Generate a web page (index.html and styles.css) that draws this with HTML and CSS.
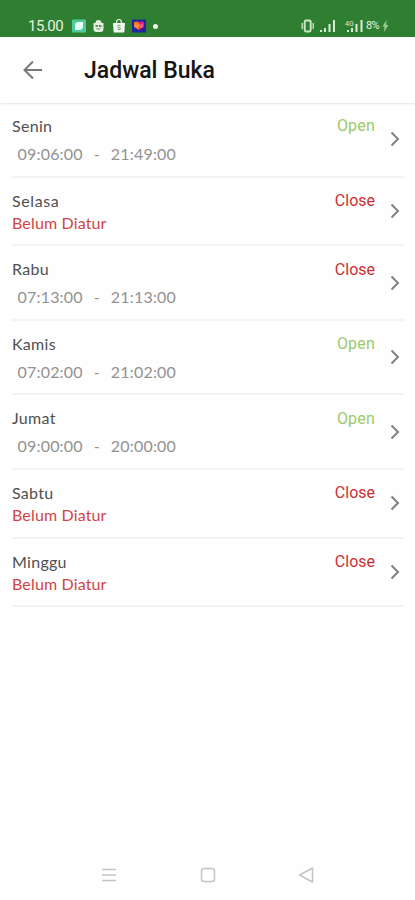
FILE: index.html
```html
<!DOCTYPE html>
<html lang="id">
<head>
<meta charset="utf-8">
<meta name="viewport" content="width=device-width, initial-scale=1">
<title>Jadwal Buka</title>
<link rel="stylesheet" href="styles.css">
</head>
<body>
<div class="status-bar">
  <div class="status-left">
    <span class="clock">15.00</span>
    <svg class="notices" width="82" height="16" viewBox="0 0 82 16">
      <rect x="0" y="1.5" width="14" height="13" rx="1" fill="#50c99b"/>
      <path d="M3 12V7q0-3 4-3h4v4q0 4-4 4z" fill="#e5fff3"/>
      <path d="M21.500 5h2q0-3 3-3t3 3h2v6q0 3-3 3h-4q-3 0-3-3z" fill="#e4f2dd"/>
      <path d="M24 9V7l1.500 2V7m2 2V7l1.500 2V7M24.500 10.500q2 1.500 4 0" fill="none" stroke="#2f7d32" stroke-width=".8"/>
      <path d="M41 5h12l-.7 9.500H41.700z" fill="#f0f7ec"/>
      <path d="M44.500 5q0-3.500 2.500-3.500T49.500 5" fill="none" stroke="#f0f7ec" stroke-width="1.200"/>
      <path d="M48.500 7.500q-3-1-3 .7t3 1.800q0 2.500-3.200 1.200" fill="none" stroke="#6f9e6b" stroke-width="1"/>
      <rect x="60" y="1.500" width="14" height="13" fill="#20259a"/>
      <path d="M67 12l-5-3V4l3-.5 2 1z" fill="#ff751f"/>
      <path d="M67 12l5-3V4l-3-.5-2 1z" fill="#ee168e"/>
      <path d="M64 6v3h2V7h2v2h2V6" fill="none" stroke="#ffb06a" stroke-width=".8"/>
    </svg>
    <span class="dot"></span>
  </div>
  <div class="status-right">
    <svg width="64" height="16" viewBox="0 0 64 16">
      <g fill="none" stroke="#cfe6c8">
        <rect x="3.700" y="2.500" width="6" height="11" rx="1.500" stroke-width="1.900"/>
        <path d="M1.200 5v6M12.200 5v6" stroke-width="1.300"/>
      </g>
      <path d="M19 12h2v2h-2zM23 10h2v4h-2zM27.500 6h2v8h-2zM32 2h2v12h-2zM46 12h2v2h-2zM50 10h2v4h-2zM54.500 6h2v8h-2zM59.500 2h2v12h-2z" fill="#d9ecd3"/>
      <text class="network" x="44" y="8">4G</text>
    </svg>
    <span class="battery">8%</span>
    <svg width="7" height="12" viewBox="0 0 7 12"><path d="M4.500 0L.5 6.500h2L2 12l4.500-7H4z" fill="#9acb92"/></svg>
  </div>
</div>
<header class="app-bar">
  <svg width="20" height="20" viewBox="0 0 20 20"><path d="M10 1.500L1.500 10l8.500 8.500M1.500 10H19" fill="none" stroke="#777" stroke-width="2"/></svg>
  <h1>Jadwal Buka</h1>
</header>
<main>
  <section class="day">
    <div class="info"><div class="name">Senin</div><div class="hours"><span>09:06:00</span><span>-</span><span>21:49:00</span></div></div>
    <div class="state open">Open</div>
    <svg class="chevron" viewBox="0 0 10 16"><path d="M1.500 1.500L8 8l-6.500 6.500"/></svg>
  </section>
  <section class="day unset">
    <div class="info"><div class="name wide">Selasa</div><div class="empty">Belum Diatur</div></div>
    <div class="state">Close</div>
    <svg class="chevron" viewBox="0 0 10 16"><path d="M1.500 1.500L8 8l-6.500 6.500"/></svg>
  </section>
  <section class="day">
    <div class="info"><div class="name">Rabu</div><div class="hours"><span>07:13:00</span><span>-</span><span>21:13:00</span></div></div>
    <div class="state">Close</div>
    <svg class="chevron" viewBox="0 0 10 16"><path d="M1.500 1.500L8 8l-6.500 6.500"/></svg>
  </section>
  <section class="day">
    <div class="info"><div class="name">Kamis</div><div class="hours"><span>07:02:00</span><span>-</span><span>21:02:00</span></div></div>
    <div class="state open">Open</div>
    <svg class="chevron" viewBox="0 0 10 16"><path d="M1.500 1.500L8 8l-6.500 6.500"/></svg>
  </section>
  <section class="day">
    <div class="info"><div class="name">Jumat</div><div class="hours"><span>09:00:00</span><span>-</span><span>20:00:00</span></div></div>
    <div class="state open">Open</div>
    <svg class="chevron" viewBox="0 0 10 16"><path d="M1.500 1.500L8 8l-6.500 6.500"/></svg>
  </section>
  <section class="day unset">
    <div class="info"><div class="name">Sabtu</div><div class="empty">Belum Diatur</div></div>
    <div class="state">Close</div>
    <svg class="chevron" viewBox="0 0 10 16"><path d="M1.500 1.500L8 8l-6.500 6.500"/></svg>
  </section>
  <section class="day unset">
    <div class="info"><div class="name">Minggu</div><div class="empty">Belum Diatur</div></div>
    <div class="state">Close</div>
    <svg class="chevron" viewBox="0 0 10 16"><path d="M1.500 1.500L8 8l-6.500 6.500"/></svg>
  </section>
</main>
<nav class="system-nav">
  <svg width="16" height="16" viewBox="0 0 16 16"><path d="M1 2.500h14M1 8h14M1 13.500h14"/></svg>
  <svg width="16" height="16" viewBox="0 0 16 16"><rect x="1.500" y="1.500" width="13" height="13" rx="2.500"/></svg>
  <svg width="16" height="16" viewBox="0 0 16 16"><path d="M14.500 1v14L1.500 8z" stroke-linejoin="round"/></svg>
</nav>
</body>
</html>
```
FILE: styles.css
```css
* { box-sizing: border-box; }
body {
  margin: 0;
  height: 900px;
  display: flex;
  flex-direction: column;
  background: #fefefe;
  font-family: Lato, sans-serif;
}
svg { display: block; flex: none; }
.status-bar {
  height: 37px;
  padding: 15px 26px 0 28px;
  display: flex;
  justify-content: space-between;
  background: #2f7f33;
  color: #e6f3df;
}
.status-left, .status-right { display: flex; align-items: center; height: 22px; }
.clock { width: 44px; font: 15px/22px Roboto, sans-serif; letter-spacing: -.5px; }
.dot { width: 5px; height: 5px; margin-left: -1px; border-radius: 50%; background: #f2faee; }
.network { font: 7px Roboto, sans-serif; fill: #d9ecd3; }
.battery { width: 16px; margin-left: 1px; font: 11px/22px Roboto, sans-serif; letter-spacing: -.8px; }
.app-bar {
  height: 66px;
  display: flex;
  align-items: center;
  gap: 41px;
  padding: 0 23px 1px;
  box-shadow: 0 0 3px #0003;
  clip-path: inset(0 0 -4px);
}
h1 { margin: 3px 0 0; font: 500 23px/30px Roboto, sans-serif; color: #151515; }
.day {
  display: flex;
  height: 74.600px;
  margin: 0 11px 0 12px;
  padding-top: 12px;
  border-bottom: 2px solid #f2f2f2;
}
.day.unset { height: 68.700px; }
.info { flex: 1; font-size: 16px; line-height: 22px; color: #505050; }
.name { letter-spacing: .3px; }
.name.wide { letter-spacing: .6px; }
.empty { color: #d04548; letter-spacing: .15px; }
.hours { display: flex; margin: 6px 0 0 5.500px; color: #929292; letter-spacing: .2px; }
.hours span:nth-child(2) { width: 28px; text-align: center; }
.state { padding-top: .3px; font: 16px/22px Roboto, sans-serif; color: #cb3034; }
.state.open { color: #9aca6a; letter-spacing: .2px; }
.chevron {
  width: 10px;
  height: 16px;
  margin: 0 4px 12px 15px;
  align-self: center;
  fill: none;
  stroke: #808080;
  stroke-width: 2;
}
.system-nav {
  display: flex;
  justify-content: space-between;
  margin-top: auto;
  padding: 0 101px 17px;
  fill: none;
  stroke: #c4c4c4;
  stroke-width: 1.500;
}
```
